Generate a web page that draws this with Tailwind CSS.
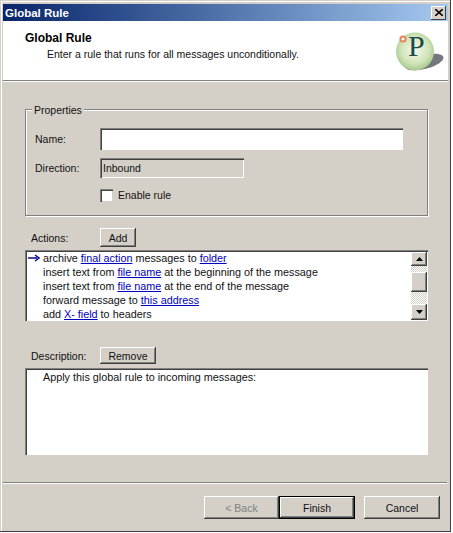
<!DOCTYPE html>
<html lang="en">
<head>
    <meta charset="UTF-8">
    <title>Global Rule</title>
    <script src="https://cdn.jsdelivr.net/npm/@tailwindcss/browser@4"></script>
</head>
<body class="bg-white">
    <div class="w-[451px] h-[532px] flex flex-col bg-[#d4d0c8] border-r border-b border-[#404040] shadow-[inset_1px_1px_0_#d4d0c8,inset_2px_2px_0_#fff] pt-[4px] pl-[3px] pr-[2px] font-['Liberation_Sans',sans-serif] text-[10.5px] leading-[14px] text-[#111]">

        <!-- title bar -->
        <div class="h-[17px] flex items-center justify-between pl-[2px] pr-[2px] bg-gradient-to-r from-[#0a246a] to-[#a6caf0]">
            <span class="font-bold text-white text-[11.5px]">Global Rule</span>
            <button class="w-[15px] h-[14px] flex items-center justify-center bg-[#d4d0c8] shadow-[inset_-1px_-1px_0_#404040,inset_1px_1px_0_#fff]">
                <svg width="8" height="7" viewBox="0 0 8 7"><path d="M0 0l8 7M8 0L0 7" stroke="#000" stroke-width="1.6"/></svg>
            </button>
        </div>

        <!-- header -->
        <div class="h-[59px] bg-white relative pl-[22px] pt-[10px]">
            <div class="font-bold text-black text-[12px]">Global Rule</div>
            <div class="ml-[22px] mt-[2px]">Enter a rule that runs for all messages unconditionally.</div>
            <svg class="absolute left-[390px] top-[10px]" width="54" height="42" viewBox="0 0 54 42">
                <defs>
                    <radialGradient id="ball" cx="0.5" cy="0.45" r="0.6">
                        <stop offset="0" stop-color="#f4f8ec"/>
                        <stop offset="0.6" stop-color="#d2e5ba"/>
                        <stop offset="1" stop-color="#9cc383"/>
                    </radialGradient>
                </defs>
                <ellipse cx="31" cy="31" rx="20" ry="7" fill="#77777f" transform="rotate(-14 31 31)"/>
                <circle cx="22" cy="20.5" r="19" fill="url(#ball)"/>
                <circle cx="10" cy="8" r="2.6" fill="#fff" stroke="#e8835a" stroke-width="2"/>
            </svg>
            <span class="absolute left-[405px] top-[8px] font-['Liberation_Serif',serif] text-[30px] leading-[34px] text-[#1d4a4a]">P</span>
        </div>
        <div class="h-[2px] bg-white border-t border-[#808080]"></div>

        <!-- body -->
        <div class="flex-1 flex flex-col pl-[22px] pr-[20px]">
            <div class="relative mt-[27px] h-[107px] border border-[#808080] shadow-[inset_1px_1px_0_#fff,1px_1px_0_#fff]">
                <span class="absolute left-[6px] top-[-7px] px-[2px] bg-[#d4d0c8]">Properties</span>
                <div class="flex items-center mt-[18px] h-[22px]">
                    <span class="w-[74px] pl-[9px]">Name:</span>
                    <div class="w-[303px] h-[22px] bg-white shadow-[inset_1px_1px_0_#808080,inset_2px_2px_0_#404040,inset_-1px_-1px_0_#fff]"></div>
                </div>
                <div class="flex items-center mt-[8px] h-[20px]">
                    <span class="w-[74px] pl-[9px]">Direction:</span>
                    <div class="w-[144px] h-[20px] pl-[3px] leading-[20px] shadow-[inset_1px_1px_0_#808080,inset_2px_2px_0_#404040,inset_-1px_-1px_0_#fff]">Inbound</div>
                </div>
                <div class="flex items-center mt-[10px] ml-[74px]">
                    <div class="w-[13px] h-[13px] bg-white shadow-[inset_1px_1px_0_#808080,inset_2px_2px_0_#404040,inset_-1px_-1px_0_#d4d0c8]"></div>
                    <span class="ml-[5px]">Enable rule</span>
                </div>
            </div>

            <div class="flex items-center mt-[12px] h-[19px]">
                <span class="w-[75px] pl-[6px]">Actions:</span>
                <button class="w-[36px] h-[19px] text-center bg-[#d4d0c8] shadow-[inset_-1px_-1px_0_#404040,inset_1px_1px_0_#fff,inset_-2px_-2px_0_#808080]">Add</button>
            </div>

            <div class="mt-[3px] h-[71px] flex bg-white text-[10.8px] shadow-[inset_1px_1px_0_#808080,inset_2px_2px_0_#404040,inset_-1px_-1px_0_#fff]">
                <div class="flex-1 pt-[1px] pl-[18px] relative overflow-hidden">
                    <svg class="absolute left-[3px] top-[4px]" width="12" height="8" viewBox="0 0 12 8"><path d="M0 4h9M7 1l4 3-4 3" fill="none" stroke="#0a0a8a" stroke-width="1.5"/></svg>
                    <div class="h-[14px] whitespace-nowrap">archive <a class="text-[#0000c0] underline">final action</a> messages to <a class="text-[#0000c0] underline">folder</a></div>
                    <div class="h-[14px] whitespace-nowrap">insert text from <a class="text-[#0000c0] underline">file name</a> at the beginning of the message</div>
                    <div class="h-[14px] whitespace-nowrap">insert text from <a class="text-[#0000c0] underline">file name</a> at the end of the message</div>
                    <div class="h-[14px] whitespace-nowrap">forward message to <a class="text-[#0000c0] underline">this address</a></div>
                    <div class="h-[14px] whitespace-nowrap">add <a class="text-[#0000c0] underline">X- field</a> to headers</div>
                </div>
                <!-- scrollbar -->
                <div class="w-[16px] mt-[2px] mb-[1px] mr-[1px] flex flex-col bg-[repeating-conic-gradient(#d4d0c8_0_25%,#fff_0_50%)] bg-[length:2px_2px]">
                    <div class="h-[14px] flex items-center justify-center bg-[#d4d0c8] shadow-[inset_-1px_-1px_0_#404040,inset_1px_1px_0_#fff,inset_-2px_-2px_0_#808080]">
                        <svg width="7" height="4" viewBox="0 0 7 4"><path d="M3.5 0L7 4H0z" fill="#000"/></svg>
                    </div>
                    <div class="h-[20px] mt-[6px] bg-[#d4d0c8] shadow-[inset_-1px_-1px_0_#404040,inset_1px_1px_0_#fff,inset_-2px_-2px_0_#808080]"></div>
                    <div class="flex-1"></div>
                    <div class="h-[16px] flex items-center justify-center bg-[#d4d0c8] shadow-[inset_-1px_-1px_0_#404040,inset_1px_1px_0_#fff,inset_-2px_-2px_0_#808080]">
                        <svg width="7" height="4" viewBox="0 0 7 4"><path d="M0 0h7L3.5 4z" fill="#000"/></svg>
                    </div>
                </div>
            </div>

            <div class="flex items-center mt-[26px] h-[17px]">
                <span class="w-[75px] pl-[6px]">Description:</span>
                <button class="w-[56px] h-[17px] text-center bg-[#d4d0c8] shadow-[inset_-1px_-1px_0_#404040,inset_1px_1px_0_#fff,inset_-2px_-2px_0_#808080]">Remove</button>
            </div>
            <div class="mt-[4px] h-[87px] pl-[18px] pt-[2px] bg-white text-[10.8px] shadow-[inset_1px_1px_0_#808080,inset_2px_2px_0_#404040,inset_-1px_-1px_0_#fff]">Apply this global rule to incoming messages:</div>
        </div>

        <!-- footer -->
        <div class="h-[2px] bg-white border-t border-[#808080] mr-[1px]"></div>
        <div class="h-[47px] flex pt-[12px] pl-[201px]">
            <button class="w-[75px] h-[23px] text-center text-[#808080] bg-[#d4d0c8] shadow-[inset_-1px_-1px_0_#404040,inset_1px_1px_0_#fff,inset_-2px_-2px_0_#808080]">&lt; Back</button>
            <button class="w-[76px] h-[23px] text-center bg-[#d4d0c8] border border-black shadow-[inset_-1px_-1px_0_#404040,inset_1px_1px_0_#fff,inset_-2px_-2px_0_#808080]">Finish</button>
            <button class="ml-[9px] w-[76px] h-[23px] text-center bg-[#d4d0c8] shadow-[inset_-1px_-1px_0_#404040,inset_1px_1px_0_#fff,inset_-2px_-2px_0_#808080]">Cancel</button>
        </div>
    </div>
</body>
</html>
